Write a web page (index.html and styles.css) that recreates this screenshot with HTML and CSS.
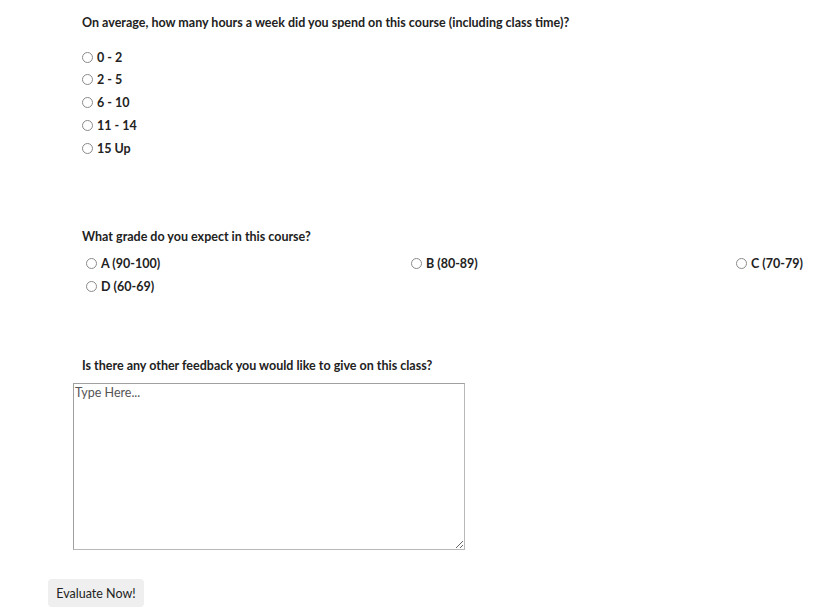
FILE: index.html
```html
<!DOCTYPE html>
<html>
<head>
<meta charset="utf-8">
<link rel="stylesheet" href="styles.css">
</head>
<body>
<form class="survey">
  <section class="q q-hours">
    <p class="q-title">On average, how many hours a week did you spend on this course (including class time)?</p>
    <div class="opts-list">
      <label class="opt"><input type="radio" name="hours"><span>0 - 2</span></label>
      <label class="opt"><input type="radio" name="hours"><span>2 - 5</span></label>
      <label class="opt"><input type="radio" name="hours"><span>6 - 10</span></label>
      <label class="opt"><input type="radio" name="hours"><span>11 - 14</span></label>
      <label class="opt"><input type="radio" name="hours"><span>15 Up</span></label>
    </div>
  </section>
  <section class="q q-grade">
    <p class="q-title">What grade do you expect in this course?</p>
    <div class="opts-grid">
      <label class="opt"><input type="radio" name="grade"><span>A (90-100)</span></label>
      <label class="opt"><input type="radio" name="grade"><span>B (80-89)</span></label>
      <label class="opt"><input type="radio" name="grade"><span>C (70-79)</span></label>
      <label class="opt"><input type="radio" name="grade"><span>D (60-69)</span></label>
    </div>
  </section>
  <section class="q q-feedback">
    <p class="q-title">Is there any other feedback you would like to give on this class?</p>
    <textarea class="fb" placeholder="Type Here..."></textarea>
  </section>
  <button type="button" class="submit">Evaluate Now!</button>
</form>
</body>
</html>
```
FILE: styles.css
```css
html, body {
  margin: 0;
  padding: 0;
  background: #fff;
}
body {
  font-family: Lato, "Open Sans", "Liberation Sans", sans-serif;
  font-size: 12.5px;
  font-weight: 700;
  color: #222;
}
.survey {
  padding: 14px 0 0 48px;
}
.q {
  padding-left: 34px;
}
.q-title {
  margin: 0;
  line-height: 18px;
  white-space: nowrap;
}
.opts-list {
  display: flex;
  flex-direction: column;
  gap: 4.75px;
  margin-top: 16px;
}
.opt {
  display: flex;
  align-items: center;
  height: 18px;
  white-space: nowrap;
}
.opt input {
  appearance: none;
  -webkit-appearance: none;
  width: 11px;
  height: 11px;
  border: 1px solid #8a8a8a;
  border-radius: 50%;
  margin: 0 4px 0 0;
  background: #fff;
  box-sizing: border-box;
  flex: none;
}
.q-grade {
  margin-top: 71px;
}
.opts-grid {
  display: grid;
  grid-template-columns: 325px 325px auto;
  row-gap: 5px;
  margin-top: 8px;
  padding-left: 4px;
}
.q-feedback {
  margin-top: 62px;
  padding-left: 25px;
}
.q-feedback .q-title {
  padding-left: 9px;
}
.fb {
  display: block;
  width: 392px;
  height: 167px;
  margin: 8px 0 0;
  box-sizing: border-box;
  border: 1px solid #b8b8b8;
  border-top-color: #a0a0a0;
  border-left-color: #a0a0a0;
  padding: 1px 1px;
  font-family: inherit;
  font-size: 12.5px;
  font-weight: 400;
  color: #333;
  resize: vertical;
}
.fb::placeholder {
  color: #555;
}
.submit {
  display: block;
  margin-top: 29px;
  width: 96px;
  height: 28px;
  background: #efefef;
  border: none;
  border-radius: 4px;
  font-family: inherit;
  font-size: 12.5px;
  font-weight: 400;
  color: #222;
  padding: 0;
}
```
